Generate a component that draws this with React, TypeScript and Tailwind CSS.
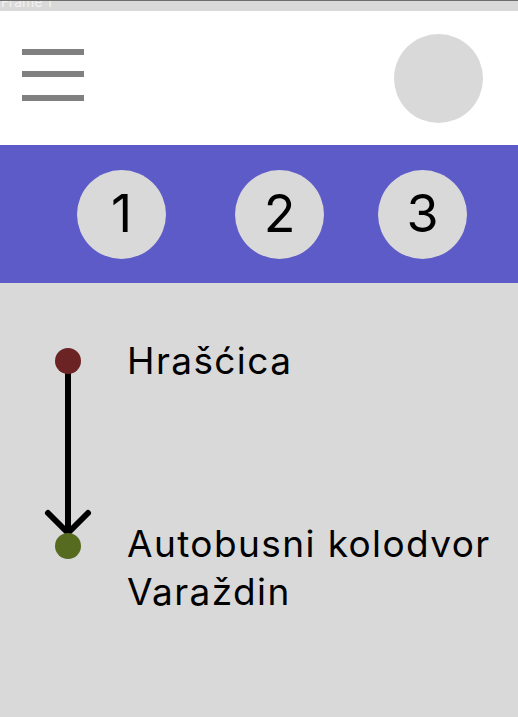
export default function App() {
  return (
    <div className="relative h-[717px] w-[518px] overflow-hidden bg-[#d9d9d9] font-['Inter',sans-serif] text-black">
      {/* Frame label strip */}
      <div className="h-[11px] overflow-hidden border-t border-[#6e6e6e]">
        <div className="-mt-[8px] pl-px text-[14px] leading-[18px] text-[#f2f2f2]">Frame 1</div>
      </div>

      {/* Header */}
      <header className="flex h-[134px] items-start justify-between bg-white pl-[22px] pr-[35px]">
        <div className="mt-[38px] flex w-[62px] flex-col">
          <span className="h-[6px] bg-[#808080]" />
          <span className="mt-[16px] h-[6px] bg-[#808080]" />
          <span className="mt-[18px] h-[6px] bg-[#808080]" />
        </div>
        <div className="mt-[23px] h-[89px] w-[89px] rounded-full bg-[#d9d9d9]" />
      </header>

      {/* Steps */}
      <nav className="flex h-[138px] items-center bg-[#5d5bc8] pl-[77px]">
        <div className="flex h-[89px] w-[89px] items-center justify-center rounded-full bg-[#d9d9d9] text-[52px]">1</div>
        <div className="ml-[69px] flex h-[89px] w-[89px] items-center justify-center rounded-full bg-[#d9d9d9] text-[52px]">2</div>
        <div className="ml-[54px] flex h-[89px] w-[89px] items-center justify-center rounded-full bg-[#d9d9d9] text-[52px]">3</div>
      </nav>

      {/* Route */}
      <section className="flex pl-[38px] pt-[54px]">
        <svg width="60" height="240" viewBox="0 0 60 240" className="shrink-0">
          <line x1="30" y1="24" x2="30" y2="196" stroke="#000" strokeWidth="6" />
          <polyline points="10,176 30,196 50,176" fill="none" stroke="#000" strokeWidth="6" strokeLinecap="round" strokeLinejoin="round" />
          <circle cx="30" cy="24" r="13" fill="#6b2323" />
          <circle cx="30" cy="209" r="13" fill="#566b1f" />
        </svg>
        <div className="ml-[29px] flex flex-col text-[37px] leading-[48px] tracking-[1.4px]">
          <span>Hrašćica</span>
          <span className="mt-[135px]">
            Autobusni kolodvor
            <br />
            Varaždin
          </span>
        </div>
      </section>
    </div>
  )
}
